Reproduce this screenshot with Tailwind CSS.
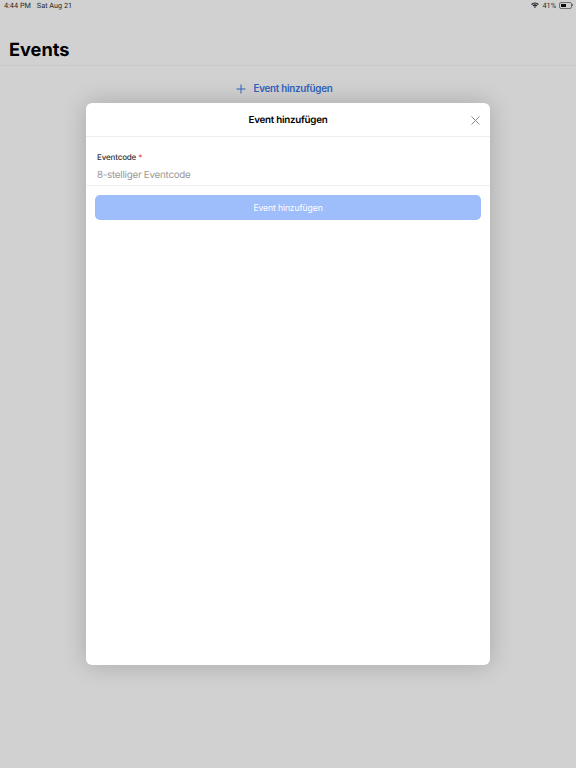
<!DOCTYPE html>
<html lang="de">
<head>
    <meta charset="UTF-8">
    <meta name="viewport" content="width=device-width, initial-scale=1.0">
    <title>Events</title>
    <script src="https://cdn.jsdelivr.net/npm/@tailwindcss/browser@4"></script>
</head>
<body class="relative w-[576px] h-[768px] overflow-hidden bg-white text-black font-['Inter',sans-serif] antialiased [text-rendering:geometricPrecision]">

    <!-- Statusleiste -->
    <div class="h-[11px] flex items-center justify-between pl-[4px] pr-[3px] text-[7.3px] leading-none font-['Roboto',sans-serif] text-[#333]">
        <div class="flex gap-[6px]">
            <span>4:44 PM</span>
            <span>Sat Aug 21</span>
        </div>
        <div class="flex items-center gap-[3px]">
            <svg width="8" height="6" viewBox="0 0 9 7" fill="#222"><path d="M0 2.4 A6.4 6.4 0 0 1 9 2.4 L8 3.4 A5 5 0 0 0 1 3.4 Z M1.7 4.1 A4 4 0 0 1 7.3 4.1 L6.3 5.1 A2.6 2.6 0 0 0 2.7 5.1 Z M3.3 5.7 A1.7 1.7 0 0 1 5.7 5.7 L4.5 7 Z"/></svg>
            <span>41%</span>
            <div class="flex items-center">
                <div class="w-[13px] h-[7px] rounded-[2px] border border-[#888] p-[1px]">
                    <div class="w-[5px] h-full bg-[#111]"></div>
                </div>
                <div class="w-[1px] h-[2px] bg-[#888]"></div>
            </div>
        </div>
    </div>

    <!-- Kopfbereich -->
    <header class="h-[55px] pl-[9px] pt-[27px] border-b border-[#f6f6f6]">
        <h1 class="text-[18.2px] leading-[24px] font-bold">Events</h1>
    </header>

    <div class="flex justify-center pr-[7px] mt-[16px]">
        <button class="flex items-center gap-[7px] text-[#3a78e8] text-[9.8px] leading-[14px] font-semibold tracking-[-0.25px]">
            <svg width="10" height="10" viewBox="0 0 10 10" fill="none" stroke="currentColor" stroke-width="1"><path d="M5 0.5V9.5M0.5 5H9.5"/></svg>
            Event hinzufügen
        </button>
    </div>

    <!-- Abdunkelung -->
    <div class="absolute inset-0 bg-black/[.18]"></div>

    <!-- Dialog -->
    <div class="absolute left-[86px] top-[103px] w-[404px] h-[562px] bg-white rounded-[6px] shadow-[0_0_24px_rgba(0,0,0,0.2)]">
        <div class="relative h-[34px] pt-[3px] flex items-center justify-center border-b border-[#eeeeee]">
            <h2 class="text-[9.8px] font-semibold tracking-[-0.25px]">Event hinzufügen</h2>
            <svg class="absolute right-[10px] top-[13px]" width="9" height="9" viewBox="0 0 9 9" fill="none" stroke="#888" stroke-width="1"><path d="M0.5 0.5L8.5 8.5M8.5 0.5L0.5 8.5"/></svg>
        </div>

        <div class="h-[49px] border-b border-[#eeeeee] pl-[11px] pt-[15px]">
            <label class="block text-[8px] leading-[11px] font-medium text-[#333] tracking-[-0.15px]">Eventcode <span class="text-[#e5484d]">*</span></label>
            <p class="mt-[6px] text-[9.8px] leading-[13px] text-[#999] tracking-[-0.25px]">8-stelliger Eventcode</p>
        </div>

        <button class="mt-[9px] mx-[9px] w-[386px] h-[25px] pt-[1px] rounded-[5px] bg-[#9dbdfb] text-white text-[8.6px] tracking-[-0.1px]">Event hinzufügen</button>
    </div>
</body>
</html>
